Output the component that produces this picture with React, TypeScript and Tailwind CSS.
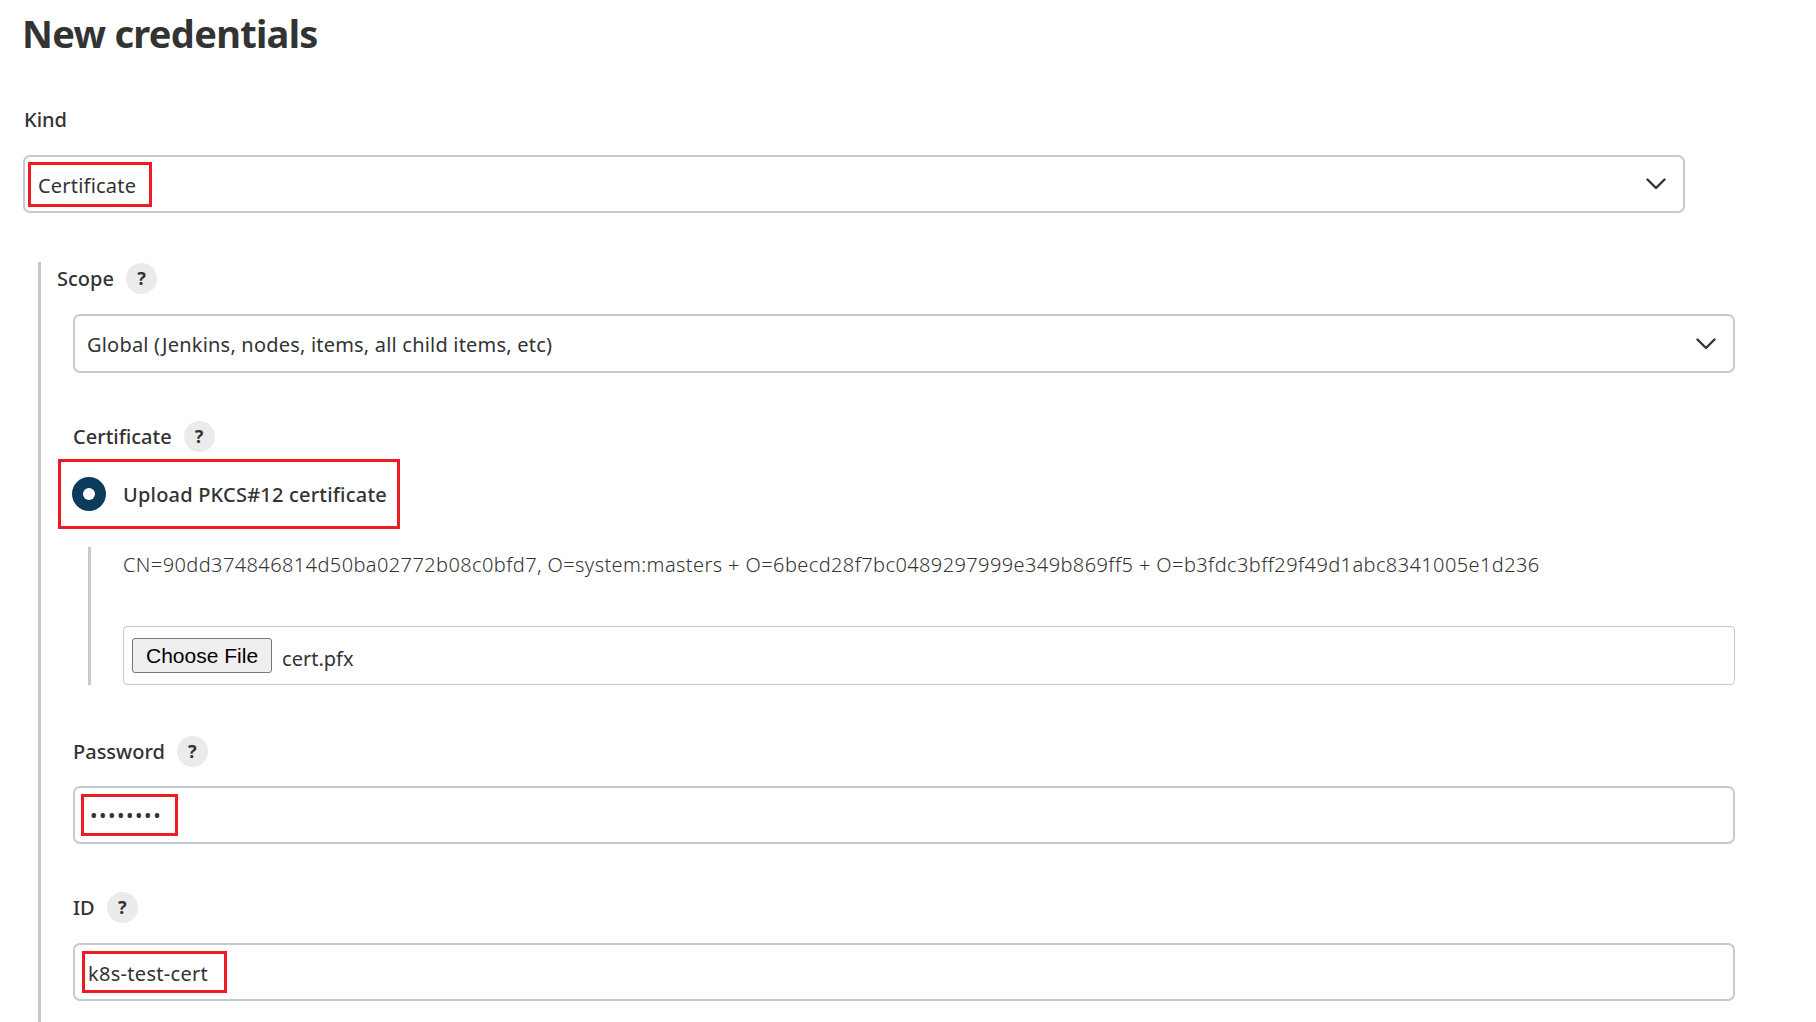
import React from 'react'

function HelpIcon() {
  return (
    <span className="ml-[12px] flex h-[31px] w-[31px] items-center justify-center rounded-full bg-[#ebebeb] text-[18px] font-bold text-[#333]">
      ?
    </span>
  )
}

function Chevron() {
  return (
    <svg width="20" height="12" viewBox="0 0 20 12" fill="none" className="mr-[17px] shrink-0">
      <polyline points="1.5,1.5 10,10 18.5,1.5" stroke="#333" strokeWidth="2.4" strokeLinecap="round" strokeLinejoin="round" />
    </svg>
  )
}

function FieldLabel({ text, className = '' }: { text: string; className?: string }) {
  return (
    <div className={`flex h-[31px] items-center ${className}`}>
      <span className="text-[20px] font-medium leading-[28px] text-[#333]">{text}</span>
      <HelpIcon />
    </div>
  )
}

export default function App() {
  return (
    <div className="h-[1022px] w-full overflow-hidden bg-white font-['Noto_Sans',sans-serif] text-[#333]">
      <div className="flex h-full flex-col">
        <h1 className="ml-[22px] mt-[9px] text-[38px] font-bold leading-[48px] tracking-[-0.7px] text-[#333]">New credentials</h1>

        <div className="ml-[24px] mt-[49px] text-[20px] font-medium leading-[28px]">Kind</div>

        {/* Kind select */}
        <div className="ml-[23px] mt-[21px] flex h-[58px] w-[1662px] items-center justify-between rounded-[7px] border-2 border-[#c3cbd2] pl-[3px]">
          <span className="flex h-[45px] items-center border-[3px] border-[#ed1c24] pl-[7px] pr-[13px] pt-[4px] text-[20px] leading-[28px] tracking-[0.2px]">
            Certificate
          </span>
          <Chevron />
        </div>

        {/* Kind details */}
        <div className="ml-[38px] mt-[49px] flex-1 border-l-[3px] border-[#c3cbd2] pt-[1px]">
          <FieldLabel text="Scope" className="pl-[16px]" />

          <div className="ml-[32px] mt-[20px] flex h-[59px] w-[1662px] items-center justify-between rounded-[7px] border-2 border-[#c3cbd2] pl-[12px]">
            <span className="pt-[2px] text-[20px] leading-[28px] tracking-[0.2px]">Global (Jenkins, nodes, items, all child items, etc)</span>
            <Chevron />
          </div>

          <FieldLabel text="Certificate" className="ml-[32px] mt-[48px]" />

          <div className="ml-[17px] mt-[7px] flex h-[70px] w-[342px] items-center border-[3px] border-[#ed1c24] pl-[11px]">
            <span className="flex h-[34px] w-[34px] items-center justify-center rounded-full bg-[#0b3c5d]">
              <span className="h-[12px] w-[12px] rounded-full bg-white" />
            </span>
            <span className="ml-[17px] pt-[2px] text-[20px] font-medium leading-[28px] tracking-[0.2px]">Upload PKCS#12 certificate</span>
          </div>

          <div className="ml-[47px] mt-[18px] border-l-[3px] border-[#c3cbd2] pl-[32px] pt-[4px]">
            <div className="text-[20px] font-light leading-[28px] tracking-[0.4px] text-[#333]">
              CN=90dd374846814d50ba02772b08c0bfd7, O=system:masters + O=6becd28f7bc0489297999e349b869ff5 + O=b3fdc3bff29f49d1abc8341005e1d236
            </div>
            <div className="mt-[47px] flex h-[59px] w-[1612px] items-center rounded-[4px] border border-[#c3cbd2] pl-[8px]">
              <span className="flex h-[35px] items-center rounded-[3px] border border-[#767676] bg-[#efefef] px-[13px] font-['Liberation_Sans',sans-serif] text-[21px] text-black">
                Choose File
              </span>
              <span className="ml-[10px] mt-[6px] text-[20px] leading-[28px]">cert.pfx</span>
            </div>
          </div>

          <FieldLabel text="Password" className="ml-[32px] mt-[51px]" />

          <div className="ml-[32px] mt-[19px] flex h-[58px] w-[1662px] items-center rounded-[7px] border-2 border-[#c3cbd2] pl-[6px]">
            <span className="flex h-[42px] w-[97px] items-center border-[3px] border-[#ed1c24] pl-[6px] pt-[2px] text-[20px] leading-none tracking-[1.5px]">
              ••••••••
            </span>
          </div>

          <FieldLabel text="ID" className="ml-[32px] mt-[48px]" />

          <div className="ml-[32px] mt-[20px] flex h-[58px] w-[1662px] items-center rounded-[7px] border-2 border-[#c3cbd2] pl-[7px]">
            <span className="flex h-[42px] w-[145px] items-center border-[3px] border-[#ed1c24] pl-[3px] pt-[3px] text-[20px] leading-[28px] tracking-[0.3px]">
              k8s-test-cert
            </span>
          </div>
        </div>
      </div>
    </div>
  )
}
